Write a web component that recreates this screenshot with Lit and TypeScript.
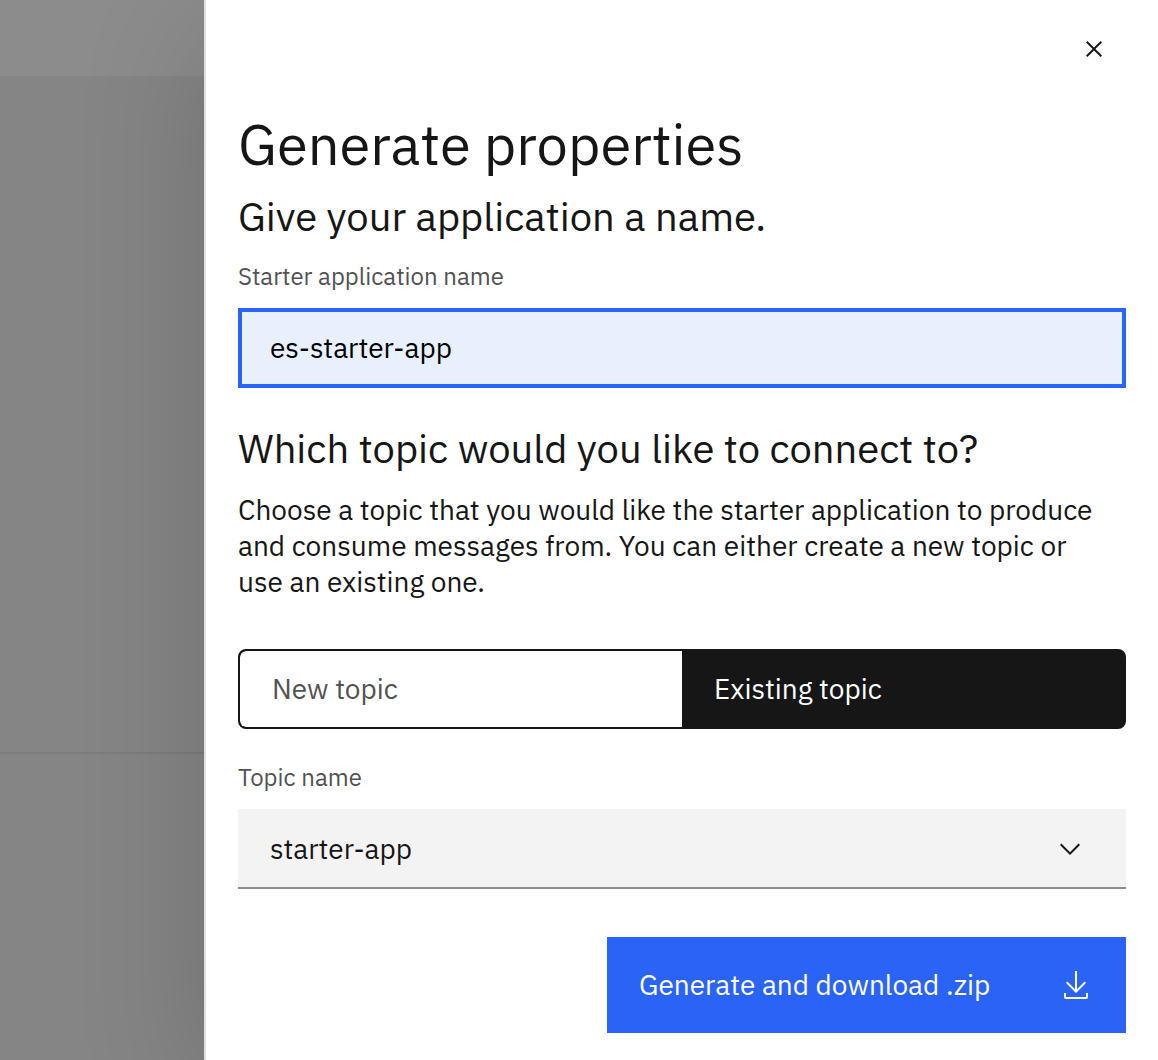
import { LitElement, html, css } from "lit";
import { customElement, state } from "lit/decorators.js";

type TopicMode = "new" | "existing";

@customElement("app-root")
export class AppRoot extends LitElement {
  static styles = css`
    :host {
      display: block;
      font-family: "IBM Plex Sans", Roboto, "Liberation Sans", sans-serif;
      color: #161616;
    }
    * {
      box-sizing: border-box;
    }
    .shell {
      display: grid;
      grid-template-columns: 204px minmax(0, 1fr);
      min-height: 100vh;
      overflow: hidden;
    }
    .backdrop {
      display: flex;
      flex-direction: column;
      background: #858585;
    }
    .backdrop-header {
      height: 76px;
      background: #8c8c8c;
    }
    .backdrop-section {
      height: 678px;
      border-bottom: 2px solid #7c7c7c;
    }
    .panel {
      display: flex;
      flex-direction: column;
      padding: 25px 32px 24px;
      background: #fff;
      border-left: 2px solid #e0e0e0;
      box-shadow: 0 32px 120px rgba(0, 0, 0, 0.16);
    }
    button,
    input,
    select {
      font: inherit;
      margin: 0;
      border-radius: 0;
    }
    svg {
      display: block;
      fill: currentColor;
    }
    .close {
      align-self: flex-end;
      display: flex;
      align-items: center;
      justify-content: center;
      width: 64px;
      height: 48px;
      padding: 0;
      border: 0;
      background: transparent;
      color: #161616;
      cursor: pointer;
    }
    h1,
    h2,
    p {
      margin: 0;
      font-weight: 400;
    }
    h1 {
      margin-top: 35px;
      font-size: 56px;
      line-height: 72px;
    }
    h2 {
      font-size: 40px;
      line-height: 56px;
    }
    form {
      display: flex;
      flex-direction: column;
      margin-top: 8px;
    }
    .field {
      display: flex;
      flex-direction: column;
      gap: 16px;
      margin-top: 16px;
    }
    .field label {
      font-size: 24px;
      line-height: 32px;
      color: #525252;
    }
    .text-input {
      width: 100%;
      height: 80px;
      padding: 0 28px 2px;
      border: 4px solid #2a64f6;
      background: #e8effd;
      color: #000;
      font-size: 28px;
      outline: none;
    }
    .topic-title {
      margin-top: 32px;
    }
    .copy {
      margin-top: 16px;
      padding-right: 16px;
      font-size: 28px;
      line-height: 36px;
    }
    .switcher {
      display: grid;
      grid-template-columns: 1fr 1fr;
      height: 80px;
      margin-top: 49px;
      border: 2px solid #161616;
      border-radius: 8px;
      background: #161616;
      overflow: hidden;
    }
    .switch {
      padding: 0 32px 2px;
      border: 0;
      background: #fff;
      color: #525252;
      font-size: 28px;
      text-align: left;
      cursor: pointer;
    }
    .switch:first-child {
      border-radius: 6px 0 0 6px;
    }
    .switch:last-child {
      border-radius: 0 6px 6px 0;
    }
    .switch[aria-selected="true"] {
      background: #161616;
      color: #fff;
    }
    .topic-field {
      margin-top: 32px;
    }
    .select-wrap {
      display: grid;
      align-items: center;
    }
    .select-wrap > * {
      grid-area: 1 / 1;
    }
    .select-wrap svg {
      justify-self: end;
      margin-right: 40px;
      pointer-events: none;
    }
    select {
      appearance: none;
      width: 100%;
      height: 80px;
      padding: 0 96px 0 32px;
      border: 0;
      border-bottom: 2px solid #8d8d8d;
      background: #f3f3f3;
      color: #161616;
      font-size: 28px;
    }
    .submit {
      align-self: flex-end;
      display: flex;
      align-items: center;
      justify-content: space-between;
      width: 519px;
      max-width: 100%;
      height: 96px;
      margin-top: 48px;
      padding: 0 34px 0 32px;
      border: 0;
      background: #2a64f6;
      color: #fff;
      font-size: 28px;
      text-align: left;
      cursor: pointer;
    }
    .submit span {
      padding-bottom: 2px;
    }
  `;

  @state() private name = "es-starter-app";
  @state() private mode: TopicMode = "existing";

  private renderSwitch(mode: TopicMode, label: string) {
    return html`<button
      class="switch"
      type="button"
      role="tab"
      aria-selected=${this.mode === mode ? "true" : "false"}
      @click=${() => (this.mode = mode)}
    >
      ${label}
    </button>`;
  }

  render() {
    return html`
      <div class="shell">
        <div class="backdrop">
          <div class="backdrop-header"></div>
          <div class="backdrop-section"></div>
        </div>
        <main class="panel">
          <button class="close" type="button" aria-label="Close">
            <svg width="32" height="32" viewBox="0 0 32 32" aria-hidden="true">
              <path
                d="M24 9.4 22.6 8 16 14.6 9.4 8 8 9.4l6.6 6.6L8 22.6 9.4 24l6.6-6.6 6.6 6.6 1.4-1.4-6.6-6.6L24 9.4z"
              />
            </svg>
          </button>
          <h1>Generate properties</h1>
          <form @submit=${(e: Event) => e.preventDefault()}>
            <h2>Give your application a name.</h2>
            <div class="field">
              <label for="app-name">Starter application name</label>
              <input
                id="app-name"
                class="text-input"
                type="text"
                .value=${this.name}
                @input=${(e: Event) =>
                  (this.name = (e.target as HTMLInputElement).value)}
              />
            </div>
            <h2 class="topic-title">Which topic would you like to connect to?</h2>
            <p class="copy">
              Choose a topic that you would like the starter application to
              produce and consume messages from. You can either create a new
              topic or use an existing one.
            </p>
            <div class="switcher" role="tablist">
              ${this.renderSwitch("new", "New topic")}
              ${this.renderSwitch("existing", "Existing topic")}
            </div>
            <div class="field topic-field">
              <label for="topic-name">Topic name</label>
              <div class="select-wrap">
                <select id="topic-name">
                  <option>starter-app</option>
                </select>
                <svg width="32" height="32" viewBox="0 0 16 16" aria-hidden="true">
                  <path d="M8 11 3 6l.7-.7L8 9.6l4.3-4.3.7.7z" />
                </svg>
              </div>
            </div>
            <button class="submit" type="submit">
              <span>Generate and download .zip</span>
              <svg width="32" height="32" viewBox="0 0 32 32" aria-hidden="true">
                <path
                  d="M26 24v4H6v-4H4v4a2 2 0 0 0 2 2h20a2 2 0 0 0 2-2v-4zM26 14l-1.41-1.41L17 20.17V2h-2v18.17l-7.59-7.58L6 14l10 10 10-10z"
                />
              </svg>
            </button>
          </form>
        </main>
      </div>
    `;
  }
}
